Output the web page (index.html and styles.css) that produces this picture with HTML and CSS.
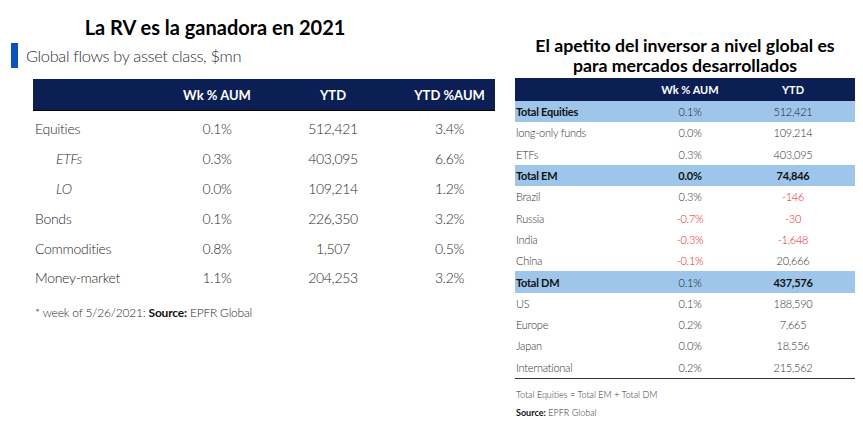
FILE: index.html
```html
<!DOCTYPE html>
<html>
<head>
<meta charset="utf-8">
<link rel="stylesheet" href="styles.css">
</head>
<body>
<div class="page">
  <section class="left">
    <h1 class="title-left">La RV es la ganadora en 2021</h1>
    <div class="subtitle"><span class="bar"></span><span class="subtitle-text">Global flows by asset class, $mn</span></div>
    <div class="ltable">
      <div class="lhead">
        <span></span><span>Wk % AUM</span><span>YTD</span><span class="c4">YTD %AUM</span>
      </div>
      <div class="lbody">
        <div class="lrow"><span class="lab">Equities</span><span>0.1%</span><span>512,421</span><span class="c4">3.4%</span></div>
        <div class="lrow"><span class="lab sub">ETFs</span><span>0.3%</span><span>403,095</span><span class="c4">6.6%</span></div>
        <div class="lrow"><span class="lab sub">LO</span><span>0.0%</span><span>109,214</span><span class="c4">1.2%</span></div>
        <div class="lrow"><span class="lab">Bonds</span><span>0.1%</span><span>226,350</span><span class="c4">3.2%</span></div>
        <div class="lrow"><span class="lab">Commodities</span><span>0.8%</span><span>1,507</span><span class="c4">0.5%</span></div>
        <div class="lrow"><span class="lab">Money-market</span><span>1.1%</span><span>204,253</span><span class="c4">3.2%</span></div>
      </div>
      <p class="lnote">* week of 5/26/2021: <b>Source:</b> EPFR Global</p>
    </div>
  </section>
  <section class="right">
    <h2 class="title-right">El apetito del inversor a nivel global es<br>para mercados desarrollados</h2>
    <div class="rtable">
      <div class="rhead"><span></span><span>Wk % AUM</span><span>YTD</span></div>
      <div class="rrow total"><span class="lab b">Total Equities</span><span>0.1%</span><span>512,421</span></div>
      <div class="rrow"><span class="lab">long-only funds</span><span>0.0%</span><span>109,214</span></div>
      <div class="rrow"><span class="lab">ETFs</span><span>0.3%</span><span>403,095</span></div>
      <div class="rrow total"><span class="lab b">Total EM</span><span class="b">0.0%</span><span class="b">74,846</span></div>
      <div class="rrow"><span class="lab">Brazil</span><span>0.3%</span><span class="neg">-146</span></div>
      <div class="rrow"><span class="lab">Russia</span><span class="neg">-0.7%</span><span class="neg">-30</span></div>
      <div class="rrow"><span class="lab">India</span><span class="neg">-0.3%</span><span class="neg">-1,648</span></div>
      <div class="rrow"><span class="lab">China</span><span class="neg">-0.1%</span><span>20,666</span></div>
      <div class="rrow total"><span class="lab b">Total DM</span><span>0.1%</span><span class="b">437,576</span></div>
      <div class="rrow"><span class="lab">US</span><span>0.1%</span><span>188,590</span></div>
      <div class="rrow"><span class="lab">Europe</span><span>0.2%</span><span>7,665</span></div>
      <div class="rrow"><span class="lab">Japan</span><span>0.0%</span><span>18,556</span></div>
      <div class="rrow last"><span class="lab">International</span><span>0.2%</span><span>215,562</span></div>
    </div>
    <p class="rnote">Total Equities = Total EM + Total DM</p>
    <p class="rnote src"><b>Source:</b> EPFR Global</p>
  </section>
</div>
</body>
</html>
```

FILE: styles.css
```css
html, body {
  margin: 0;
  padding: 0;
  background: #ffffff;
}
body {
  width: 863px;
  height: 428px;
  overflow: hidden;
  font-family: Lato, "Open Sans", sans-serif;
  color: #2e2e2e;
}
.page {
  display: flex;
}
.left {
  width: 515px;
  flex: none;
}
.right {
  width: 340px;
  flex: none;
}
.title-left {
  margin: 15px 0 0 0;
  height: 24px;
  line-height: 24px;
  font-size: 20px;
  font-weight: 700;
  color: #000;
  text-align: center;
  width: 430px;
}
.subtitle {
  margin-top: 4px;
  margin-left: 11px;
  height: 25px;
  display: flex;
  align-items: center;
  gap: 8px;
}
.bar {
  width: 7px;
  height: 25px;
  background: #0a52c4;
}
.subtitle-text {
  font-size: 16.5px;
  font-weight: 300;
  color: #333;
  letter-spacing: -0.4px;
}
.ltable {
  margin-top: 11px;
  margin-left: 33px;
  width: 462px;
}
.lhead, .lrow {
  display: grid;
  grid-template-columns: 127px 114px 118px 103px;
  align-items: center;
  text-align: center;
}
.lhead {
  height: 31px;
  background: #0b1f55;
  border-bottom: 1px solid #000;
  color: #fff;
  font-weight: 700;
  font-size: 13px;
}
.c4 {
  padding-left: 12px;
}
.lbody {
  padding-top: 3px;
}
.lrow {
  height: 29.8px;
  font-size: 14px;
  font-weight: 300;
  color: #2a2a2a;
  letter-spacing: -0.3px;
}
.lab {
  text-align: left;
  padding-left: 2px;
}
.lab.sub {
  padding-left: 23px;
  font-style: italic;
}
.lnote {
  margin: 13px 0 0 2px;
  font-size: 12px;
  line-height: 14px;
  font-weight: 300;
  color: #2a2a2a;
  letter-spacing: -0.2px;
}
.lnote b {
  font-weight: 700;
  color: #111;
}
.title-right {
  margin: 36px 0 0 0;
  font-size: 17.7px;
  line-height: 20px;
  font-weight: 700;
  color: #000;
  text-align: center;
  width: 340px;
}
.rtable {
  margin-top: 2px;
  border-bottom: 1px solid #333;
}
.rhead, .rrow {
  display: grid;
  grid-template-columns: 125px 100px 106px 1fr;
  align-items: center;
  text-align: center;
}
.rhead {
  height: 23px;
  background: #0b1f55;
  color: #fff;
  font-weight: 700;
  font-size: 11px;
}
.rrow {
  height: 21.3px;
  font-size: 11px;
  font-weight: 300;
  color: #333;
  letter-spacing: -0.25px;
}
.rrow .lab {
  padding-left: 1px;
}
.rrow.total {
  background: #9dc6ea;
  color: #222;
}
.b {
  font-weight: 700;
  color: #111;
}
.neg {
  color: #f01818;
}
.rnote {
  margin: 10px 0 0 1px;
  font-size: 9px;
  line-height: 12px;
  font-weight: 300;
  color: #333;
}
.rnote.src {
  margin-top: 6px;
}
.rnote b {
  font-weight: 700;
  color: #111;
}
```
